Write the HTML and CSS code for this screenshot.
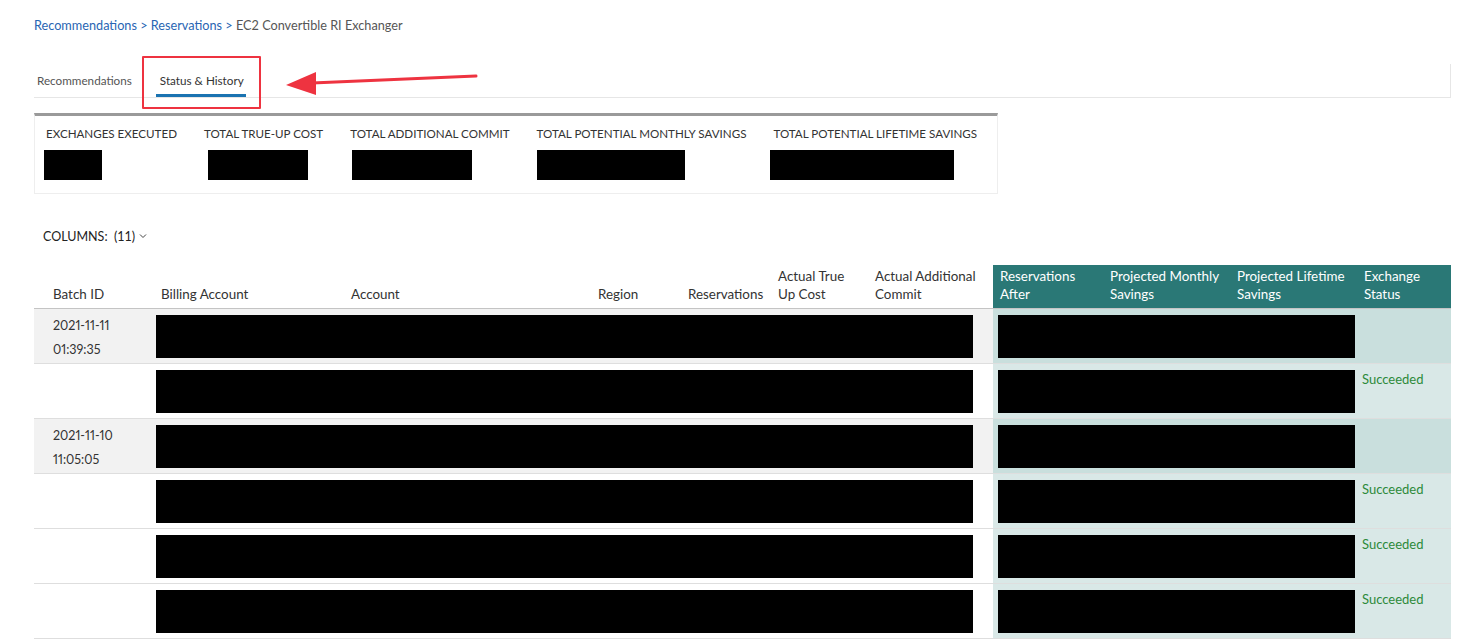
FILE: index.html
```html
<!DOCTYPE html>
<html>
<head>
<meta charset="utf-8">
<link rel="stylesheet" href="styles.css">
</head>
<body>
<div class="page">
  <nav class="crumbs">
    <a class="crumb-link">Recommendations</a> <span class="sep">&gt;</span> <a class="crumb-link">Reservations</a> <span class="sep">&gt;</span> <span class="crumb-current">EC2 Convertible RI Exchanger</span>
  </nav>

  <div class="tabs">
    <div class="tab">Recommendations</div>
    <div class="tab active">Status &amp; History</div>
    <div class="highlight-box"></div>
    <svg class="arrow" width="200" height="30" viewBox="0 0 200 30">
      <line x1="194" y1="10" x2="30" y2="17" stroke="#ee3340" stroke-width="3" stroke-linecap="round"/>
      <polygon points="4,19 34,6 34,29" fill="#ee3340"/>
    </svg>
  </div>

  <section class="summary">
    <div class="stat">
      <div class="stat-label">EXCHANGES EXECUTED</div>
      <div class="redact r-exec"></div>
    </div>
    <div class="stat">
      <div class="stat-label">TOTAL TRUE-UP COST</div>
      <div class="redact r-true"></div>
    </div>
    <div class="stat">
      <div class="stat-label">TOTAL ADDITIONAL COMMIT</div>
      <div class="redact r-commit"></div>
    </div>
    <div class="stat">
      <div class="stat-label">TOTAL POTENTIAL MONTHLY SAVINGS</div>
      <div class="redact r-monthly"></div>
    </div>
    <div class="stat">
      <div class="stat-label">TOTAL POTENTIAL LIFETIME SAVINGS</div>
      <div class="redact r-life"></div>
    </div>
  </section>

  <div class="columns-ctl">COLUMNS:&nbsp; (11) <svg class="chev" width="8" height="6" viewBox="0 0 8 6"><path d="M1 1.5 L4 4.5 L7 1.5" fill="none" stroke="#444" stroke-width="1"/></svg></div>

  <table class="grid">
    <colgroup>
      <col class="c1"><col class="c2"><col class="c3"><col class="c4"><col class="c5"><col class="c6"><col class="c7"><col class="c8"><col class="c9"><col class="c10"><col class="c11">
    </colgroup>
    <thead>
      <tr>
        <th class="first">Batch ID</th>
        <th>Billing Account</th>
        <th>Account</th>
        <th>Region</th>
        <th>Reservations</th>
        <th>Actual True<br>Up Cost</th>
        <th>Actual Additional<br>Commit</th>
        <th class="proj">Reservations<br>After</th>
        <th class="proj">Projected Monthly<br>Savings</th>
        <th class="proj">Projected Lifetime<br>Savings</th>
        <th class="proj">Exchange<br>Status</th>
      </tr>
    </thead>
    <tbody>
      <tr class="group">
        <td class="first batch">2021-11-11<br>01:39:35</td>
        <td colspan="6" class="blk"><div class="redact r-left"></div></td>
        <td colspan="3" class="blk right"><div class="redact r-right"></div></td>
        <td class="right status"></td>
      </tr>
      <tr class="item">
        <td class="first batch"></td>
        <td colspan="6" class="blk"><div class="redact r-left"></div></td>
        <td colspan="3" class="blk right"><div class="redact r-right"></div></td>
        <td class="right status">Succeeded</td>
      </tr>
      <tr class="group">
        <td class="first batch">2021-11-10<br>11:05:05</td>
        <td colspan="6" class="blk"><div class="redact r-left"></div></td>
        <td colspan="3" class="blk right"><div class="redact r-right"></div></td>
        <td class="right status"></td>
      </tr>
      <tr class="item">
        <td class="first batch"></td>
        <td colspan="6" class="blk"><div class="redact r-left"></div></td>
        <td colspan="3" class="blk right"><div class="redact r-right"></div></td>
        <td class="right status">Succeeded</td>
      </tr>
      <tr class="item">
        <td class="first batch"></td>
        <td colspan="6" class="blk"><div class="redact r-left"></div></td>
        <td colspan="3" class="blk right"><div class="redact r-right"></div></td>
        <td class="right status">Succeeded</td>
      </tr>
      <tr class="item">
        <td class="first batch"></td>
        <td colspan="6" class="blk"><div class="redact r-left"></div></td>
        <td colspan="3" class="blk right"><div class="redact r-right"></div></td>
        <td class="right status">Succeeded</td>
      </tr>
    </tbody>
  </table>
</div>
</body>
</html>
```

FILE: styles.css
```css
* { box-sizing: border-box; }
html, body { margin: 0; padding: 0; background: #fff; }
body {
  font-family: "Lato", "Noto Sans", sans-serif;
  color: #333;
  overflow: hidden;
}
.page {
  padding: 16px 27px 0 34px;
}
.crumbs {
  font-size: 12.7px;
  line-height: 18px;
  color: #555;
  white-space: nowrap;
}
.crumb-link { color: #2965b3; }
.sep { color: #2965b3; }
.crumb-current { color: #565656; }

.tabs {
  position: relative;
  margin-top: 30px;
  height: 34px;
  display: flex;
  align-items: flex-start;
  border-bottom: 1px solid #e6e6e6;
  border-right: 1px solid #e6e6e6;
}
.tab {
  font-size: 11.7px;
  line-height: 16px;
  color: #555;
  padding: 8px 3px 0 3px;
  height: 33px;
  margin-right: 21px;
}
.tab.active {
  color: #333;
  position: relative;
  padding: 8px 0 0 4px;
}
.tab.active::after {
  content: "";
  position: absolute;
  left: 0;
  right: -2px;
  bottom: 0;
  height: 3px;
  background: #1a73b1;
}
.highlight-box {
  position: absolute;
  left: 108px;
  top: -8px;
  width: 119px;
  height: 53px;
  border: 2px solid #ee3340;
  border-radius: 1px;
}
.arrow {
  position: absolute;
  left: 248px;
  top: 2px;
}

.summary {
  margin-top: 15px;
  width: 964px;
  height: 81px;
  border: 1px solid #eeeeee;
  border-top: 3px solid #9a9a9a;
  display: flex;
  gap: 27px;
  padding: 11px 0 0 11px;
}
.stat-label {
  font-size: 11.6px;
  line-height: 14px;
  color: #333;
  white-space: nowrap;
}
.redact { background: #000; }
.stat .redact { height: 30px; margin-top: 9px; }
.r-exec { width: 58px; margin-left: -2px; }
.r-true { width: 100px; margin-left: 4px; }
.r-commit { width: 120px; margin-left: 2px; }
.r-monthly { width: 148px; }
.r-life { width: 184px; margin-left: -3px; }

.columns-ctl {
  margin-top: 35px;
  margin-left: 9px;
  font-size: 12.5px;
  line-height: 16px;
  color: #222;
}
.chev { vertical-align: 2px; margin-left: 1px; }

.grid {
  margin-top: 20px;
  width: 1417px;
  border-collapse: collapse;
  table-layout: fixed;
  font-size: 13.4px;
}
.c1 { width: 122px; }
.c2 { width: 190px; }
.c3 { width: 247px; }
.c4 { width: 90px; }
.c5 { width: 90px; }
.c6 { width: 97px; }
.c7 { width: 123px; }
.c8 { width: 110px; }
.c9 { width: 127px; }
.c10 { width: 127px; }
.c11 { width: 94px; }

.grid th {
  font-weight: normal;
  text-align: left;
  vertical-align: bottom;
  color: #333;
  line-height: 18px;
  padding: 2px 0 5px 5px;
  height: 43px;
  border-bottom: 1px solid #c4c4c4;
  white-space: nowrap;
}
.grid th.first { padding-left: 19px; }
.grid th.proj {
  background: #2a7876;
  color: #fff;
  padding-left: 7px;
}
.grid td {
  padding: 0;
  height: 55px;
  border-bottom: 1px solid #dedede;
  vertical-align: top;
}
.grid td.batch {
  padding: 5px 0 0 19px;
  line-height: 24px;
  font-size: 12.5px;
  color: #333;
  font-variant-numeric: proportional-nums;
}
.grid td.blk { padding: 6px 0 0 0; }
.r-left { height: 43px; width: 817px; }
.r-right { height: 43px; width: 357px; margin-left: 5px; }
.grid tr.group td { background: #f2f2f2; }
.grid tr.group td.right { background: #c9dfdd; }
.grid tr.item td.right { background: #d9e8e7; }
.grid td.status {
  padding: 8px 0 0 5px;
  color: #2c8a3a;
  font-size: 13px;
  line-height: 14px;
}
```
